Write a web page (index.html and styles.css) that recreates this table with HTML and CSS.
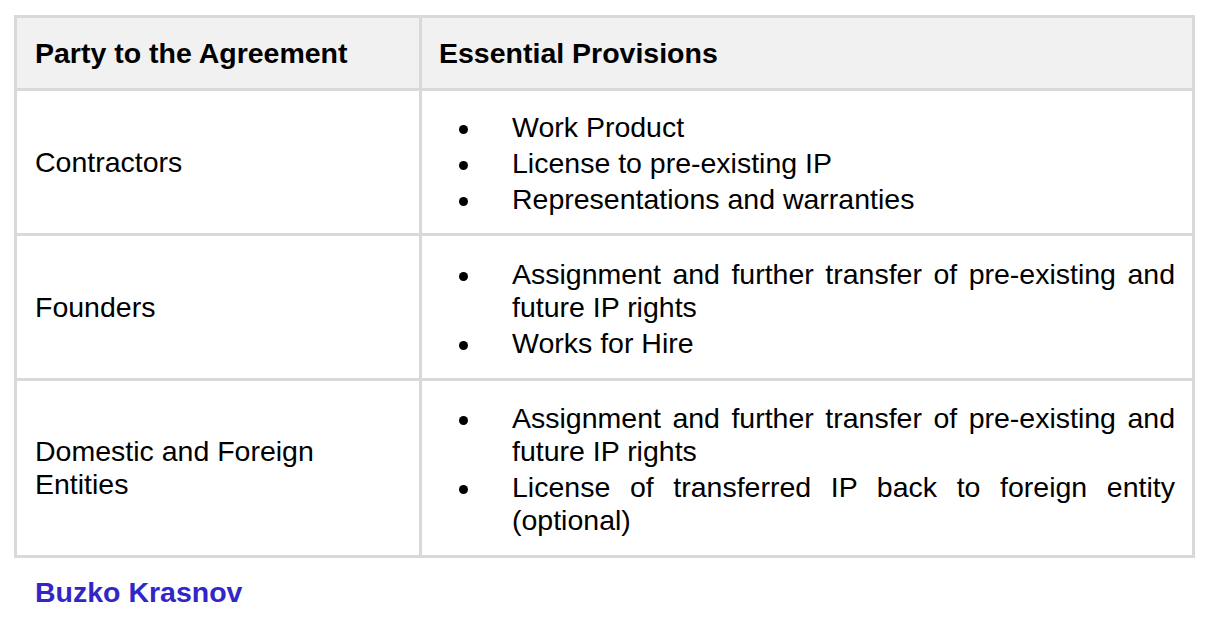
FILE: index.html
```html
<!DOCTYPE html>
<html lang="en">
<head>
<meta charset="utf-8">
<title>Party to the Agreement</title>
<link rel="stylesheet" href="styles.css">
</head>
<body>
<div class="page">
  <table class="grid">
    <thead>
      <tr>
        <th class="party">Party to the Agreement</th>
        <th>Essential Provisions</th>
      </tr>
    </thead>
    <tbody>
      <tr class="row-a">
        <td class="party">Contractors</td>
        <td>
          <ul class="provisions">
            <li><span>Work Product</span></li>
            <li><span>License to pre-existing IP</span></li>
            <li><span>Representations and warranties</span></li>
          </ul>
        </td>
      </tr>
      <tr class="row-b">
        <td class="party">Founders</td>
        <td>
          <ul class="provisions">
            <li><span>Assignment and further transfer of pre-existing and future IP rights</span></li>
            <li><span>Works for Hire</span></li>
          </ul>
        </td>
      </tr>
      <tr class="row-c">
        <td class="party">Domestic and Foreign Entities</td>
        <td>
          <ul class="provisions">
            <li><span>Assignment and further transfer of pre-existing and future IP rights</span></li>
            <li><span>License of transferred IP back to foreign entity (optional)</span></li>
          </ul>
        </td>
      </tr>
    </tbody>
  </table>
  <p class="brand">Buzko Krasnov</p>
</div>
</body>
</html>
```
FILE: styles.css
```css
body {
  margin: 0;
  background: #ffffff;
  color: #000000;
  font-family: "Liberation Sans", Arial, sans-serif;
}

.page {
  padding: 15px 0 0 14px;
}

.grid {
  width: 1181px;
  table-layout: fixed;
  border-collapse: separate;
  border-spacing: 0;
  border-top: 3px solid #d9d9d9;
  border-left: 3px solid #d9d9d9;
  font-size: 28.5px;
  line-height: 33px;
}

.grid th,
.grid td {
  border-right: 3px solid #d9d9d9;
  border-bottom: 3px solid #d9d9d9;
  padding: 17px 17px;
  text-align: left;
  vertical-align: middle;
}

.grid th.party,
.grid td.party {
  width: 405px;
  box-sizing: border-box;
  padding-left: 18px;
}

.grid thead th {
  background: #f1f1f1;
  font-weight: bold;
  padding-top: 18.5px;
  padding-bottom: 18.5px;
}

.row-b td {
  padding-top: 18.5px;
  padding-bottom: 18.5px;
}

.row-c td {
  padding-top: 18px;
  padding-bottom: 18px;
}

.provisions {
  list-style: none;
  margin: 0;
  padding: 0;
}

.provisions li {
  display: flex;
  padding-top: 3px;
}

.provisions li::before {
  content: "";
  flex: none;
  width: 9px;
  height: 9px;
  border-radius: 50%;
  background: #000000;
  margin: 14px 44.5px 0 19.5px;
}

.provisions li span {
  flex: 1;
  text-align: justify;
}

.brand {
  margin: 18px 0 0 21px;
  font-size: 28.5px;
  line-height: 33px;
  font-weight: bold;
  color: #3226c8;
}
```
